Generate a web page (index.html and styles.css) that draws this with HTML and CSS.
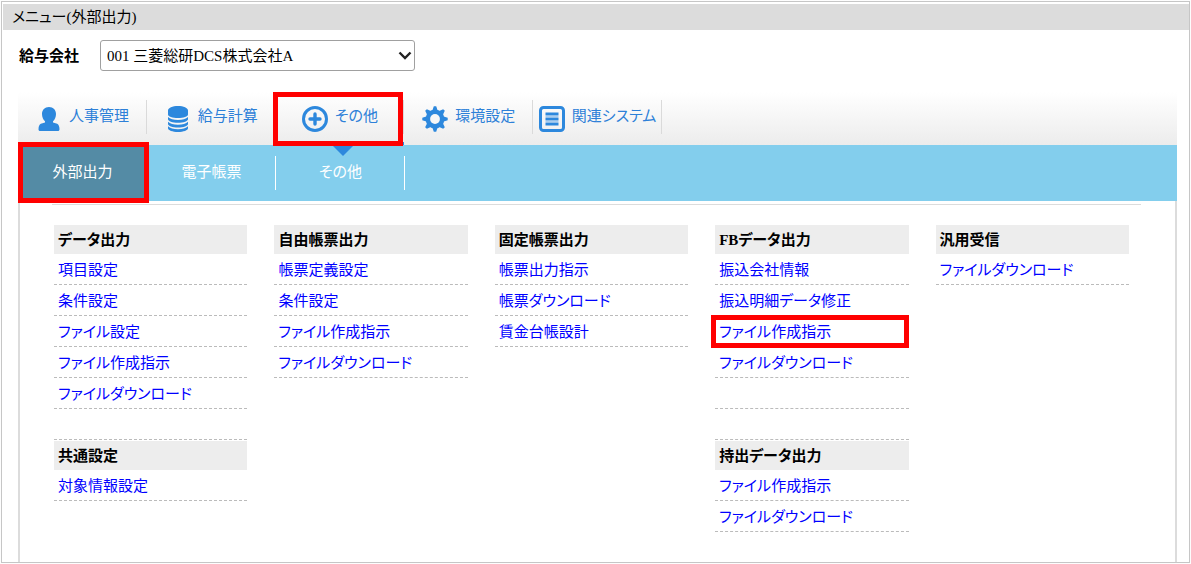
FILE: index.html
```html
<!DOCTYPE html>
<html lang="ja">
<head>
<meta charset="utf-8">
<meta name="viewport" content="width=device-width, initial-scale=1">
<title>メニュー(外部出力)</title>
<link rel="stylesheet" href="styles.css">
</head>
<body>
<div class="window">
  <h1 class="title">メニュー(外部出力)</h1>
  <div class="company">
    <label class="company-label" for="company">給与会社</label>
    <div class="select-wrap">
      <select id="company" class="company-select"><option>001 三菱総研DCS株式会社A</option></select>
      <svg class="select-arrow" viewBox="0 0 14 9" aria-hidden="true"><path d="M1.500 1.500 7 7l5.500-5.500" fill="none" stroke="#222" stroke-width="2.400"/></svg>
    </div>
  </div>
  <div class="panel">
    <nav class="tabs" aria-label="メインメニュー">
      <div class="tab-list">
        <a class="tab" href="#hr"><svg class="icon" viewBox="0 0 26 26" aria-hidden="true"><path fill="#2d88dd" d="M13 1c4.300 0 7 3 7 7 0 3.200-1.300 5.800-3 7.300v1.200l4.200 1.300c1.400.500 2.300 3 2.300 5.400 0 1-.600 1.800-1.600 1.800H4.100c-1 0-1.600-.800-1.600-1.800 0-2.400.900-4.900 2.300-5.400L9 16.500v-1.200C7.300 13.800 6 11.200 6 8c0-4 2.700-7 7-7z"/></svg><span class="tab-text">人事管理</span></a>
        <a class="tab" href="#pay"><svg class="icon" viewBox="0 0 26 26" aria-hidden="true"><path fill="#2d88dd" d="M3 4.500C3 2 7.500 0 13 0s10 2 10 4.500v4C23 10.500 18.500 12 13 12S3 10.500 3 8.500zM3 11c2 2 5.500 3 10 3s8-1 10-3v2.200c0 1.900-4.500 3.600-10 3.600S3 15.100 3 13.200zM3 15.700c2 2 5.500 3 10 3s8-1 10-3v2.200c0 1.900-4.500 3.600-10 3.600S3 19.800 3 17.900zM3 20.300c2 2 5.500 3 10 3s8-1 10-3v2C23 24.400 18.500 26 13 26S3 24.400 3 22.300z"/></svg><span class="tab-text">給与計算</span></a>
        <a class="tab tab-active" href="#other" aria-current="page"><svg class="icon" viewBox="0 0 26 26" aria-hidden="true"><circle cx="13" cy="13" r="11.500" fill="none" stroke="#2d88dd" stroke-width="3"/><path d="M13 8v10M8 13h10" stroke="#2d88dd" stroke-width="3.400" stroke-linecap="round"/></svg><span class="tab-text">その他</span></a>
        <a class="tab" href="#env"><svg class="icon" viewBox="0 0 26 26" aria-hidden="true"><g fill="#2d88dd"><path id="teeth" d="M10.200 5 11.800.3h2.400L15.800 5v16l-1.600 4.700h-2.400L10.200 21z"/><use href="#teeth" transform="rotate(45 13 13)"/><use href="#teeth" transform="rotate(90 13 13)"/><use href="#teeth" transform="rotate(135 13 13)"/><circle cx="13" cy="13" r="9.400"/></g><circle cx="13" cy="13" r="4.900" fill="#f7f7f7"/></svg><span class="tab-text">環境設定</span></a>
        <a class="tab" href="#related"><svg class="icon" viewBox="0 0 26 26" aria-hidden="true"><rect x="1.500" y="1.500" width="23" height="23" rx="3" fill="none" stroke="#2d88dd" stroke-width="3"/><path d="M6.500 8h13M6.500 13h13M6.500 18h13" stroke="#2d88dd" stroke-width="3"/><path d="M6.500 10.500h13M6.500 15.500h13" stroke="#a9cdef" stroke-width="1"/></svg><span class="tab-text">関連システム</span></a>
      </div>
    </nav>
    <nav class="subtabs" aria-label="サブメニュー">
      <div class="subtab-list">
        <a class="subtab subtab-active" href="#export" aria-current="page">外部出力</a>
        <a class="subtab" href="#forms">電子帳票</a>
        <a class="subtab" href="#misc">その他</a>
      </div>
    </nav>
    <main class="content">
      <div class="columns">
        <div class="column">
          <h2 class="group-title">データ出力</h2>
          <ul class="group">
            <li class="row"><a class="link" href="#a1">項目設定</a></li>
            <li class="row"><a class="link" href="#a2">条件設定</a></li>
            <li class="row"><a class="link" href="#a3">ファイル設定</a></li>
            <li class="row"><a class="link" href="#a4">ファイル作成指示</a></li>
            <li class="row"><a class="link" href="#a5">ファイルダウンロード</a></li>
            <li class="row"></li>
          </ul>
          <h2 class="group-title">共通設定</h2>
          <ul class="group">
            <li class="row"><a class="link" href="#a6">対象情報設定</a></li>
          </ul>
        </div>
        <div class="column">
          <h2 class="group-title">自由帳票出力</h2>
          <ul class="group">
            <li class="row"><a class="link" href="#b1">帳票定義設定</a></li>
            <li class="row"><a class="link" href="#b2">条件設定</a></li>
            <li class="row"><a class="link" href="#b3">ファイル作成指示</a></li>
            <li class="row"><a class="link" href="#b4">ファイルダウンロード</a></li>
          </ul>
        </div>
        <div class="column">
          <h2 class="group-title">固定帳票出力</h2>
          <ul class="group">
            <li class="row"><a class="link" href="#c1">帳票出力指示</a></li>
            <li class="row"><a class="link" href="#c2">帳票ダウンロード</a></li>
            <li class="row"><a class="link" href="#c3">賃金台帳設計</a></li>
          </ul>
        </div>
        <div class="column">
          <h2 class="group-title">FBデータ出力</h2>
          <ul class="group">
            <li class="row"><a class="link" href="#d1">振込会社情報</a></li>
            <li class="row"><a class="link" href="#d2">振込明細データ修正</a></li>
            <li class="row row-marked"><a class="link" href="#d3">ファイル作成指示</a></li>
            <li class="row"><a class="link" href="#d4">ファイルダウンロード</a></li>
            <li class="row"></li>
            <li class="row"></li>
          </ul>
          <h2 class="group-title">持出データ出力</h2>
          <ul class="group">
            <li class="row"><a class="link" href="#d5">ファイル作成指示</a></li>
            <li class="row"><a class="link" href="#d6">ファイルダウンロード</a></li>
          </ul>
        </div>
        <div class="column">
          <h2 class="group-title">汎用受信</h2>
          <ul class="group">
            <li class="row"><a class="link" href="#e1">ファイルダウンロード</a></li>
          </ul>
        </div>
      </div>
    </main>
  </div>
</div>
</body>
</html>
```
FILE: styles.css
```css
* {
  box-sizing: border-box;
}

body {
  margin: 0;
  padding: 1px;
  background: #fdfdfd;
  color: #000;
  font: 15px/20px "Liberation Serif", "Noto Sans CJK JP", sans-serif;
  font-feature-settings: "palt";
}

.window {
  display: flex;
  flex-direction: column;
  min-height: calc(100vh - 2px);
  padding: 2px 0 0 1px;
  border: 1px solid #c6c6c6;
  background: #fff;
}

.title {
  margin: 0;
  padding: 3px 9px;
  background: #dcdcdc;
  font-size: 15px;
  font-weight: 400;
  line-height: 20px;
}

.company {
  display: flex;
  align-items: center;
  padding: 10px 16px 21px;
}

.company-label {
  width: 81px;
  font-weight: 700;
}

.select-wrap {
  position: relative;
  width: 315px;
}

.company-select {
  display: block;
  width: 100%;
  height: 31px;
  padding: 0 30px 0 6px;
  border: 1px solid #a0a0a0;
  border-radius: 3px;
  background: #fff;
  color: #000;
  font: inherit;
  font-feature-settings: inherit;
  appearance: none;
}

.select-arrow {
  position: absolute;
  top: 11px;
  right: 3px;
  width: 14px;
  height: 9px;
  pointer-events: none;
}

.panel {
  display: flex;
  flex: 1;
  flex-direction: column;
  margin: 0 12px 0 15px;
}

.tabs {
  background: linear-gradient(#fff, #ececec);
}

.tab-list {
  display: grid;
  grid-template-columns: repeat(5, 1fr);
  width: 644px;
}

.tab {
  position: relative;
  display: flex;
  align-items: center;
  justify-content: center;
  gap: 7px;
  height: 53px;
  color: #2d80d8;
  text-decoration: none;
}

.tab::before,
.subtab::before {
  content: "";
  position: absolute;
  top: 8px;
  right: 0;
  width: 1px;
  height: 34px;
  background: #dadada;
}

.icon {
  flex: none;
  width: 26px;
  height: 26px;
}

.tab-text {
  padding-bottom: 6px;
}

.tab-active {
  padding-top: 3px;
  border-bottom: 3px solid #2d88dd;
}

.tab-active::after {
  content: "";
  position: absolute;
  z-index: 3;
  top: 0;
  right: 1px;
  bottom: -4px;
  left: -3px;
  border: 5px solid #f00;
}

.subtabs {
  background: #83ceed;
}

.subtab-list {
  position: relative;
  display: grid;
  grid-template-columns: repeat(3, 1fr);
  width: 387px;
}

.subtab-list::after {
  content: "";
  position: absolute;
  top: 0;
  left: 314px;
  border: 11px solid transparent;
  border-top-color: #2d88dd;
  border-bottom: 0;
}

.subtab {
  position: relative;
  display: flex;
  align-items: center;
  justify-content: center;
  height: 56px;
  padding-bottom: 3px;
  color: #fff;
  text-decoration: none;
}

.subtab::before {
  top: 11px;
  background: #fff;
}

.subtab-active {
  background: #548ba5;
}

.subtab-active::before {
  display: none;
}

.subtab-active::after {
  content: "";
  position: absolute;
  z-index: 4;
  top: -3px;
  right: -2px;
  bottom: -2px;
  left: 0;
  border: 5px solid #f00;
}

.content {
  flex: 1;
  padding: 3px 34px 20px 32px;
  border: solid #dcdcdc;
  border-width: 0 2px;
}

.columns {
  display: grid;
  grid-template-columns: repeat(5, 1fr);
  gap: 27px;
  padding: 19px 12px 0 2px;
  border-top: 1px solid #dcdcdc;
}

.group-title {
  margin: 1px 0 0;
  padding: 5px 4px 4px;
  background: #ededed;
  font-size: 15px;
  line-height: 20px;
}

.group {
  margin: 0;
  padding: 0;
  list-style: none;
}

.row {
  position: relative;
  height: 31px;
  padding: 6px 4px 4px;
  border-bottom: 1px dashed #bbb;
}

.row-marked::after {
  content: "";
  position: absolute;
  top: -1px;
  right: 0;
  bottom: -2px;
  left: -4px;
  border: 5px solid #f00;
  pointer-events: none;
}

.link {
  color: #00f;
  text-decoration: none;
}
```
